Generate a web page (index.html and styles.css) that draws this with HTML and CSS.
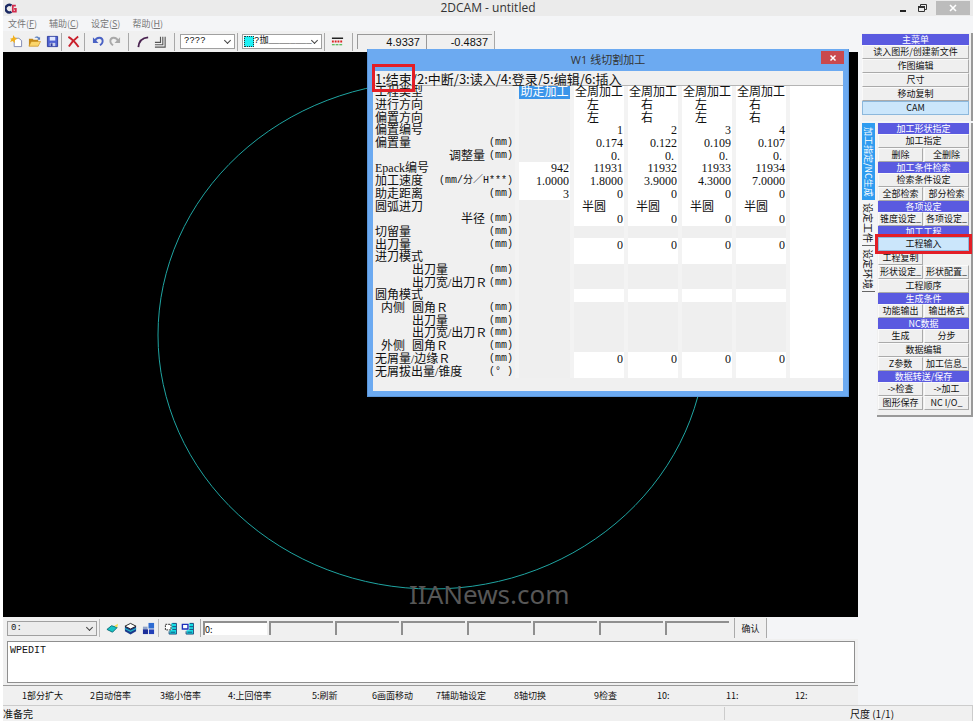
FILE: index.html
```html
<!DOCTYPE html>
<html lang="zh-CN">
<head>
<meta charset="utf-8">
<title>2DCAM - untitled</title>
<link rel="stylesheet" href="styles.css">
</head>
<body>
<div class="app">
  <header class="titlebar">
    <svg class="logo" viewBox="0 0 12 10"><path d="M6 2.2A3.5 3.5 0 1 0 6 8" fill="none" stroke="#1b2a63" stroke-width="2.2"/><path d="M10 2.4H7.2V7.8H10V5.4H8.4" fill="none" stroke="#d22b4c" stroke-width="1.6"/></svg>
    <h1>2DCAM - untitled</h1>
    <div class="winbtns">
      <button class="wb" aria-label="最小化"><svg viewBox="0 0 12 12"><path d="M3 9h6" stroke="#222" stroke-width="2"/></svg></button>
      <button class="wb" aria-label="还原"><svg viewBox="0 0 12 12"><path d="M4.5 4V2.5h6v5H9" fill="none" stroke="#333"/><path d="M2.5 4.5h6v5h-6z" fill="none" stroke="#333"/><path d="M2 5h7" stroke="#333" stroke-width="2"/></svg></button>
      <button class="wb wb-close" aria-label="关闭"><svg viewBox="0 0 12 12"><path d="M3 3l6 6M9 3l-6 6" stroke="#fff" stroke-width="1.6"/></svg></button>
    </div>
  </header>
  <nav class="menubar">
    <button>文件(<u>F</u>)</button><button>辅助(<u>C</u>)</button><button>设定(<u>S</u>)</button><button>帮助(<u>H</u>)</button>
  </nav>

  <div class="main">
    <div class="work">
      <div class="toolbar">
        <div class="group files">
          <button class="ib" aria-label="新建"><svg viewBox="0 0 14 14"><path d="M4.5 3.5h5l3 2.5v6.500h-8z" fill="#fff" stroke="#7c86b0"/><path d="M0 4l3-.8L3.600 0l1.600 2.800L8 4 5.400 5.500 5 9 3 6.500 0 7.500 1.500 5z" fill="#f3b11c"/></svg></button>
          <button class="ib" aria-label="打开"><svg viewBox="0 0 14 14"><path d="M1 4h4l1 1h5v7H1z" fill="#c58a1a"/><path d="M3.500 7H13.500L11 12H1z" fill="#fbd66b" stroke="#c58a1a" stroke-width=".6"/><path d="M7 3c1-2 4-2 5 0l1-1v3h-3l1-1c-1-1-2-1-4-1z" fill="#5b7fbf"/></svg></button>
          <button class="ib" aria-label="保存"><svg viewBox="0 0 14 14"><path d="M1.500 1.500h11v11h-11z" fill="#4f62d2" stroke="#2f3c9c"/><path d="M4 2h6v4H4z" fill="#dfe6ff"/><path d="M4 8.500h6V12H4z" fill="#c8ceec"/><path d="M5 9h2v3H5z" fill="#2f3c9c"/></svg></button>
        </div>
        <div class="group del"><button class="ib" aria-label="删除"><svg viewBox="0 0 14 14"><path d="M1.500 2Q7 5 12.500 13M12 1.500Q6 6 2 12.500" fill="none" stroke="#c9202c" stroke-width="2"/></svg></button></div>
        <div class="group undo">
          <button class="ib" aria-label="撤销"><svg viewBox="0 0 14 14"><path d="M3 6.500C5 1.500 11.500 2 11.500 6.500c0 2-1.200 3.500-3 4.500" fill="none" stroke="#4a62c4" stroke-width="2"/><path d="M1 2.500V8.500H7z" fill="#4a62c4"/></svg></button>
          <button class="ib" aria-label="重做"><svg viewBox="0 0 14 14"><path d="M11 6.500C9 1.500 2.500 2 2.500 6.500c0 2 1.200 3.500 3 4.500" fill="none" stroke="#a9a9a9" stroke-width="2"/><path d="M13 2.500V8.500H7z" fill="#a9a9a9"/></svg></button>
        </div>
        <div class="group shapes">
          <button class="ib" aria-label="圆弧"><svg viewBox="0 0 14 14"><path d="M1.500 13C2 7 6 3 12 2.500" fill="none" stroke="#4a2350" stroke-width="2"/></svg></button>
          <button class="ib" aria-label="拐角"><svg viewBox="0 0 14 14"><path d="M1 8h6V2M1 10.500h8.500V2M1 13h11V2" fill="none" stroke="#555" stroke-width="1.200"/></svg></button>
        </div>
        <div class="group"><span class="pick pen"><select aria-label="线型"><option>????</option></select></span></div>
        <div class="group"><span class="pick layer"><span class="swatch"></span><select aria-label="颜色"><option>?拁________</option></select></span></div>
        <div class="group lines"><button class="ib" aria-label="线宽"><svg viewBox="0 0 14 14"><path d="M1 3.500h12" stroke="#222" stroke-width="1.600"/><path d="M1 7h12" stroke="#d22" stroke-width="2" stroke-dasharray="2 1"/><path d="M1 10.500h12" stroke="#3a3" stroke-width="1.200" stroke-dasharray="3 1"/></svg></button></div>
        <output class="coord cx">4.9337</output><output class="coord cy">-0.4837</output>
      </div>

      <div class="canvas">
        <svg class="drawing" viewBox="0 0 855 565" preserveAspectRatio="none"><ellipse cx="429" cy="283" rx="274" ry="254" fill="none" stroke="#1fa5a2"/></svg>
        <span class="watermark">IIANews.com</span>

        <section class="dialog" role="dialog" aria-labelledby="dlg-title">
          <div class="dlg-title"><h2 id="dlg-title">W1 线切割加工</h2><button class="dlg-close" aria-label="关闭"><svg viewBox="0 0 12 12"><path d="M3 3l6 6M9 3l-6 6" stroke="#fff" stroke-width="1.800"/></svg></button></div>
          <div class="dlg-body">
            <div class="dlg-menu"><button class="marked">1:结束</button>/<button>2:中断</button>/<button>3:读入</button>/<button>4:登录</button>/<button>5:编辑</button>/<button>6:插入</button></div>
            <table class="params">
              <colgroup><col class="c-label"><col class="c-first"><col class="c-val"><col class="c-val"><col class="c-val"><col class="c-val"><col></colgroup>
              <tbody>
                <tr><th>工程类型</th><td class="sel">助走加工</td><td class="on t">全周加工</td><td class="on t">全周加工</td><td class="on t">全周加工</td><td class="on t">全周加工</td><td class="rest" rowspan="23"></td></tr>
                <tr><th>进行方向</th><td></td><td class="on d">左</td><td class="on d">右</td><td class="on d">左</td><td class="on d">右</td></tr>
                <tr><th>偏置方向</th><td></td><td class="on d">左</td><td class="on d">右</td><td class="on d">左</td><td class="on d">右</td></tr>
                <tr><th>偏置编号</th><td></td><td class="on">1</td><td class="on">2</td><td class="on">3</td><td class="on">4</td></tr>
                <tr><th><div>偏置量<i>(mm)</i></div></th><td></td><td class="on">0.174</td><td class="on">0.122</td><td class="on">0.109</td><td class="on">0.107</td></tr>
                <tr><th><div class="end">调整量<i>(mm)</i></div></th><td></td><td class="on p">0.</td><td class="on p">0.</td><td class="on p">0.</td><td class="on p">0.</td></tr>
                <tr><th>Epack编号</th><td class="on">942</td><td class="on">11931</td><td class="on">11932</td><td class="on">11933</td><td class="on">11934</td></tr>
                <tr><th><div>加工速度<i>(mm/分／H***)</i></div></th><td class="on">1.0000</td><td class="on">1.8000</td><td class="on">3.9000</td><td class="on">4.3000</td><td class="on">7.0000</td></tr>
                <tr><th><div>助走距离<i>(mm)</i></div></th><td class="on">3</td><td class="on">0</td><td class="on">0</td><td class="on">0</td><td class="on">0</td></tr>
                <tr><th>圆弧进刀</th><td></td><td class="on h">半圆</td><td class="on h">半圆</td><td class="on h">半圆</td><td class="on h">半圆</td></tr>
                <tr><th><div class="end">半径<i>(mm)</i></div></th><td></td><td class="on">0</td><td class="on">0</td><td class="on">0</td><td class="on">0</td></tr>
                <tr><th><div>切留量<i>(mm)</i></div></th><td></td><td></td><td></td><td></td><td></td></tr>
                <tr><th><div>出刀量<i>(mm)</i></div></th><td></td><td class="on">0</td><td class="on">0</td><td class="on">0</td><td class="on">0</td></tr>
                <tr><th>进刀模式</th><td></td><td class="on"></td><td class="on"></td><td class="on"></td><td class="on"></td></tr>
                <tr><th><div class="in">出刀量<i>(mm)</i></div></th><td></td><td></td><td></td><td></td><td></td></tr>
                <tr><th><div class="in">出刀宽/出刀Ｒ<i>(mm)</i></div></th><td></td><td></td><td></td><td></td><td></td></tr>
                <tr><th>圆角模式</th><td></td><td class="on"></td><td class="on"></td><td class="on"></td><td class="on"></td></tr>
                <tr><th><div><b>内侧</b>圆角Ｒ<i>(mm)</i></div></th><td></td><td></td><td></td><td></td><td></td></tr>
                <tr><th><div class="in">出刀量<i>(mm)</i></div></th><td></td><td></td><td></td><td></td><td></td></tr>
                <tr><th><div class="in">出刀宽/出刀Ｒ<i>(mm)</i></div></th><td></td><td></td><td></td><td></td><td></td></tr>
                <tr><th><div><b>外侧</b>圆角Ｒ<i>(mm)</i></div></th><td></td><td></td><td></td><td></td><td></td></tr>
                <tr><th><div>无屑量/边缘Ｒ<i>(mm)</i></div></th><td></td><td class="on">0</td><td class="on">0</td><td class="on">0</td><td class="on">0</td></tr>
                <tr><th><div>无屑拔出量/锥度<i>(° )</i></div></th><td></td><td class="on"></td><td class="on"></td><td class="on"></td><td class="on"></td></tr>
              </tbody>
            </table>
          </div>
        </section>
      </div>

      <div class="inputbar">
        <span class="pick layer-pick"><select aria-label="图层"><option>0:</option></select></span>
        <div class="group three">
          <button class="ib" aria-label="图层"><svg viewBox="0 0 14 14"><path d="M1 8l5-4 6 2-5 5z" fill="#16c4c4" stroke="#0b6b78"/><path d="M9 4l4-2-1 4z" fill="#f3e04a"/></svg></button>
          <button class="ib" aria-label="立体"><svg viewBox="0 0 14 14"><path d="M1 5v5l6 3.500L13 10V5z" fill="#1b3a8c"/><path d="M1 7l6 3 6-3" fill="none" stroke="#25b7c4" stroke-width="1.500"/><path d="M1 4.500L7 1.500l6 3L7 7.500z" fill="#fff" stroke="#222"/></svg></button>
          <button class="ib" aria-label="区块"><svg viewBox="0 0 14 14"><path d="M7 1h6v6H7z" fill="#2d6bd2"/><path d="M1 5h5v4H1z" fill="#8fa3c8"/><path d="M1 8h5.500v5H1z" fill="#1d2f9a"/><path d="M7.500 8H13v5H7.500z" fill="#2340b8"/></svg></button>
        </div>
        <div class="group two">
          <button class="ib" aria-label="选取框"><svg viewBox="0 0 14 14"><path d="M8 1h5v12H6V9h2z" fill="#16dce4"/><path d="M1.500 2.500h6v6h-6z" fill="#fff" stroke="#222" stroke-dasharray="2 1"/><path d="M9 1.500h4.500v11.500H5.500V10M9 5h4M9 8h4M7 11h5" fill="none" stroke="#174a7a"/></svg></button>
          <button class="ib" aria-label="选取块"><svg viewBox="0 0 14 14"><path d="M9 1h4v12H6V9h3z" fill="#16dce4"/><path d="M1.500 2.500h6v5h-6z" fill="#fff" stroke="#1d2fba" stroke-width="1.500"/><path d="M9.500 1.500h4v11.500H5.500V10M9 5h4M9 8h4M7 11h5" fill="none" stroke="#174a7a"/></svg></button>
        </div>
        <div class="fields">
          <input class="on" aria-label="输入 1" value="0:"><input aria-label="输入 2"><input aria-label="输入 3"><input aria-label="输入 4"><input aria-label="输入 5"><input aria-label="输入 6"><input aria-label="输入 7"><input aria-label="输入 8">
        </div>
        <button class="confirm">确认</button>
      </div>
      <div class="command"><textarea aria-label="命令">WPEDIT</textarea></div>
      <div class="fkeys">
        <button>1部分扩大</button><button>2自动倍率</button><button>3缩小倍率</button><button>4:上回倍率</button><button>5:刷新</button><button>6画面移动</button><button>7辅助轴设定</button><button>8轴切换</button><button>9检查</button><button>10:</button><button>11:</button><button>12:</button>
      </div>
    </div>

    <aside class="side">
      <div class="panel top">
        <h3>主菜单</h3>
        <button>读入图形/创建新文件</button><button>作图编辑</button><button>尺寸</button><button>移动复制</button><button class="active">CAM</button>
      </div>
      <div class="lower">
        <div class="vtabs"><button class="active">加工指定/NC生成</button><button>设定工件</button><button>设定环境</button></div>
        <div class="panel">
          <section><h3>加工形状指定</h3><button class="wide">加工指定</button><button>删除</button><button>全删除</button></section>
          <section><h3>加工条件检索</h3><button class="wide">检索条件设定</button><button>全部检索</button><button>部分检索</button></section>
          <section><h3>各项设定</h3><button>锥度设定_</button><button>各项设定_</button></section>
          <section><h3>加工工程</h3><button class="wide active marked">工程输入</button><button>工程复制</button><span></span><button>形状设定_</button><button>形状配置_</button><button class="wide">工程顺序</button></section>
          <section><h3>生成条件</h3><button>功能输出</button><button>输出格式</button></section>
          <section><h3>NC数据</h3><button>生成</button><button>分步</button><button class="wide">数据编辑</button><button>Z参数</button><button>加工信息_</button></section>
          <section><h3>数据转送/保存</h3><button>-&gt;检查</button><button>-&gt;加工</button><button>图形保存</button><button>NC I/O_</button></section>
        </div>
      </div>
    </aside>
  </div>

  <footer class="status"><span class="msg">准备完</span><span class="mid"></span><span class="scale">尺度 (1/1)</span></footer>
</div>
</body>
</html>
```
FILE: styles.css
```css
* { box-sizing: border-box; }

body {
  margin: 0;
  background: #fff;
  color: #111;
  font: 9px "Noto Sans CJK SC", "Liberation Sans", sans-serif;
}

button, input, select, textarea {
  margin: 0;
  padding: 0;
  border: 0;
  border-radius: 0;
  background: none;
  color: inherit;
  font: inherit;
}

h1, h2, h3 { margin: 0; font-size: inherit; font-weight: normal; }
svg { display: block; }

.app {
  display: flex;
  flex-direction: column;
  height: 100vh;
  margin: 0 7px 0 3px;
  background: #f4f5f7;
}

/* Title and menu */
.titlebar {
  display: grid;
  grid-template-columns: 1fr auto 1fr;
  align-items: center;
  height: 16px;
  background: #ebebeb;
}
.logo { width: 13px; height: 11px; margin-left: 2px; }
.titlebar h1 { font: 12px/16px "Open Sans", sans-serif; color: #333; }
.winbtns { display: flex; justify-content: flex-end; height: 14px; padding-right: 3px; }
.wb { display: grid; place-items: center; width: 19px; }
.wb svg { width: 12px; height: 12px; }
.wb-close { width: 34px; margin-left: 5px; background: #bcbcbc; }

.menubar { display: flex; gap: 12px; height: 15px; padding-left: 5px; color: #777; }
.menubar button { line-height: 14px; }

.main { display: flex; flex: 1; min-height: 0; }
.work { display: flex; flex: 1; flex-direction: column; min-width: 0; }

/* Toolbar */
.toolbar { display: flex; align-items: center; align-self: flex-start; height: 21px; padding-left: 7px; border-right: 1px solid #a8a8a8; background: #f0f0f0; }
.group { display: flex; align-items: center; height: 18px; border-right: 1px solid #a8a8a8; }
.ib { width: 14px; height: 14px; }
.ib svg { width: 13px; height: 13px; }
.files { gap: 4px; padding-right: 1px; }
.del { padding: 0 3px 0 5px; }
.undo { gap: 2px; padding: 0 6px 0 7px; }
.shapes { gap: 3px; padding: 0 6px 0 8px; }
.lines { padding: 0 7px 0 6px; }

/* Drop-downs with a thin chevron */
.pick { position: relative; display: flex; height: 15px; border: 1px solid #a0a0a0; background: #fff; }
.pick select { flex: 1; min-width: 0; padding-left: 3px; appearance: none; font: 9px/13px "Liberation Mono", "Noto Sans CJK SC", monospace; }
.pick::after { content: ""; position: absolute; right: 4px; top: 3px; width: 4px; height: 4px; border: solid #444; border-width: 0 1px 1px 0; transform: rotate(45deg); }
.pen { width: 55px; margin: 0 2px 0 5px; }
.layer { width: 80px; margin: 0 2px 0 4px; }
.swatch { width: 10px; height: 11px; margin: 1px 0 0 1px; background: #1ff0f4; border: 1px dotted #333; }
.layer select { padding-left: 0; }

.coord {
  height: 15px;
  padding-right: 6px;
  border-top: 1px solid #999;
  border-left: 1px solid #999;
  font: 11px/14px "Liberation Sans", sans-serif;
  text-align: right;
}
.cx { width: 69px; margin-left: 4px; }
.cy { width: 66px; margin-right: 2px; padding-right: 4px; }

/* Drawing area */
.canvas { position: relative; flex: 1; min-height: 0; background: #000; }
.drawing { width: 100%; height: 100%; }
.watermark { position: absolute; left: 406px; bottom: 5px; color: #575757; font: 26px/36px "Noto Sans", sans-serif; }

/* Dialog */
.dialog {
  position: absolute;
  top: -3px;
  right: 9px;
  width: 482px;
  padding: 0 5px 5px;
  border: 1px solid #5b96da;
  border-width: 0 1px 1px;
  background: #6caaf1;
}
.dlg-title { display: flex; align-items: center; justify-content: center; position: relative; height: 22px; }
.dlg-title h2 { font: 11px/22px "Open Sans", "Noto Sans CJK SC", sans-serif; color: #333; }
.dlg-close { position: absolute; top: 2px; right: -1px; display: grid; place-items: center; width: 23px; height: 13px; background: #c9494e; }
.dlg-close svg { width: 10px; height: 10px; }
.dlg-body { padding-bottom: 13px; background: #f0f0f0; }
.dlg-menu { height: 15px; padding-left: 2px; border-bottom: 1px solid #b4b4b4; font-size: 13px; line-height: 15px; white-space: nowrap; }
.dlg-menu .marked { position: relative; }
.dlg-menu .marked::after { content: ""; position: absolute; inset: -7px -3px -6px -3px; border: 3px solid #e31e26; z-index: 1; }

.params { width: 100%; height: 292px; border-collapse: separate; border-spacing: 0; table-layout: fixed; font: 12px/12px "Liberation Serif", "Noto Sans CJK SC", serif; }
.c-label { width: 146px; }
.c-first { width: 55px; }
.c-val { width: 54px; }
.params th, .params td { padding: 0 1px 0 0; border-right: 4px solid #f3f3f3; background: #efefef; text-align: right; font-weight: normal; white-space: nowrap; }
.params th { padding: 0 2px; text-align: left; background: #f0f0f0; }
.params td.on { background-color: #fff; }
.params td.sel { padding: 0; background: #3b95ea; background-clip: padding-box; color: #fff; text-align: center; }
.params td.t { padding: 0; text-align: center; }
.params td.d { padding-left: 13px; text-align: left; }
.params td.h { padding-left: 8px; text-align: left; }
.params td.p { padding-right: 4px; }
.params td.rest { border: 0; background: #fff; }
.params th div { display: flex; }
.params th .end { justify-content: flex-end; }
.params th .in { padding-left: 37px; }
.params th b { width: 37px; padding-left: 6px; font-weight: normal; }
.params th i { margin-left: auto; font: 10px/12px "Liberation Mono", "Noto Sans CJK SC", monospace; }
.params th .end i { margin-left: 4px; }

/* Lower bars */
.inputbar { display: flex; align-items: center; align-self: flex-start; height: 22px; background: #f0f0f0; }
.layer-pick { width: 90px; margin-left: 4px; background: #ececec; }
.three { gap: 4px; margin-left: 2px; padding: 0 2px 0 6px; border-left: 1px solid #bbb; border-right-color: #bbb; }
.two { gap: 3px; padding: 0 5px; }
.fields { display: flex; gap: 2px; margin-left: 2px; }
.fields input { width: 64px; height: 14px; border-top: 2px solid #8f8f8f; border-left: 2px solid #8f8f8f; background: #f0f0f0; }
.fields .on { background: #fff; }
.confirm { width: 33px; height: 20px; margin-left: 5px; border-left: 1px solid #aaa; border-right: 1px solid #aaa; }

.command { display: flex; height: 47px; padding: 2px 3px 2px 4px; border-bottom: 1px solid #999; background: #f0f0f0; }
.command textarea { flex: 1; padding: 2px; border: 1px solid #8f8f8f; background: #fff; resize: none; font: 10px/14px "Liberation Mono", monospace; }

.fkeys {
  display: grid;
  grid-template-columns: 68fr 70fr 68fr 84fr 60fr 64fr 78fr 80fr 63fr 69fr 69fr 63fr;
  height: 19px;
  padding-left: 19px;
  background: #f0f0f0;
}
.fkeys button { text-align: left; white-space: nowrap; }

/* Sidebar */
.side { width: 115px; padding: 2px 0 0 4px; }
.panel { flex: 1; padding: 0 2px 5px 1px; border-right: 2px solid #999; border-bottom: 2px solid #999; background: #f0f0f0; }
.panel h3 { grid-column: 1 / -1; height: 11px; background: #5a5ae0; color: #fff; text-align: center; line-height: 11px; }
.panel button { height: 14px; border: 1px solid #fafafa; border-right-color: #aaa; border-bottom-color: #aaa; background: #efefef; line-height: 12px; text-align: center; white-space: nowrap; }
.panel .active { border-color: #8cb8dc; background: #cbe6fb; }
.top { display: grid; padding: 1px 2px 6px 0; border-bottom: 0; }
.lower { display: flex; align-items: flex-start; margin-top: 2px; }
.lower section { display: grid; grid-template-columns: 1fr 1fr; column-gap: 1px; }
.lower .wide { grid-column: 1 / -1; }
.lower .marked { outline: 3px solid #e31e26; z-index: 1; }

.vtabs { display: flex; flex-direction: column; width: 15px; }
.vtabs button { width: 13px; height: 46px; border-bottom: 1px solid #666; writing-mode: vertical-rl; text-orientation: sideways; font-size: 10px; line-height: 13px; white-space: nowrap; }
.vtabs .active { height: 77px; border: 0; background: #2f9cf0; color: #fff; font-size: 9px; }

/* Status */
.status { display: flex; align-items: center; height: 16px; border-top: 1px solid #ccc; background: #f0f0f0; font-size: 10px; }
.msg { flex: 1; }
.mid { width: 126px; height: 13px; border-left: 1px solid #ccc; }
.scale { width: 123px; border-right: 1px solid #ccc; }
```
